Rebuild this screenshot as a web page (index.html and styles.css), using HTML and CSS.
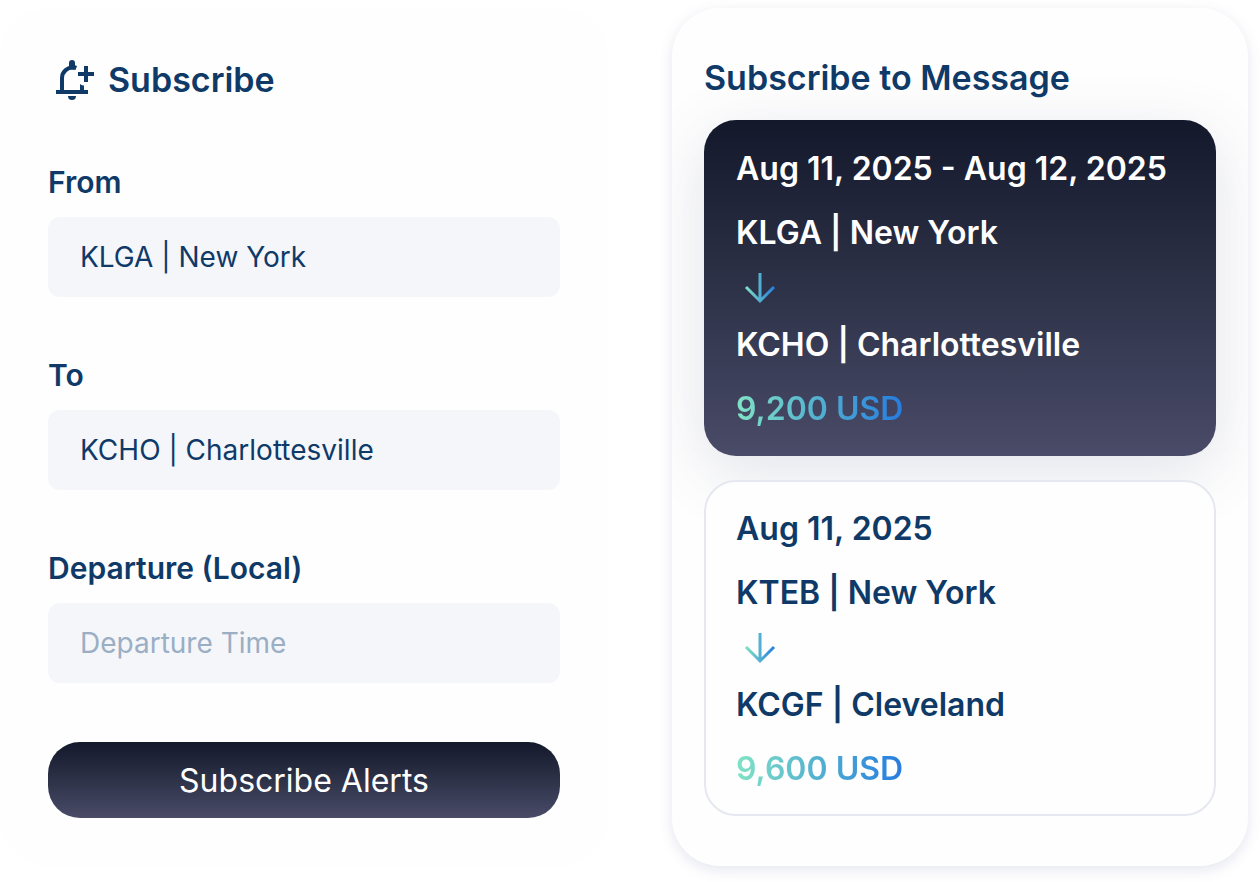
FILE: index.html
```html
<!DOCTYPE html>
<html lang="en">
<head>
    <meta charset="UTF-8">
    <meta name="viewport" content="width=device-width, initial-scale=1.0">
    <title>Subscribe</title>
    <link rel="stylesheet" href="styles.css">
</head>
<body>

<main class="page">
    <form class="panel subscribe-form">
        <h1 class="form-title">
            <svg class="bell" viewBox="0 0 48 48" aria-hidden="true">
                <path d="M14 36V22a10.500 10.500 0 0 1 12-10.300" fill="none" stroke="currentColor" stroke-width="4"/>
                <path d="M21 11V7a3 3 0 0 1 6 0v2.200l2 .8-1.500 4-6.500-1z" fill="currentColor"/>
                <path d="M8 34h32v4H8zM20 40h8a4 4 0 0 1-8 0zM32 35v-7q2 1.500 4 1.500V35zM36 10h4v6h6v4h-6v6h-4v-6h-6v-4h6z" fill="currentColor"/>
            </svg>
            Subscribe
        </h1>

        <div class="field">
            <label for="from">From</label>
            <input type="text" id="from" name="from" value="KLGA | New York">
        </div>

        <div class="field">
            <label for="to">To</label>
            <input type="text" id="to" name="to" value="KCHO | Charlottesville">
        </div>

        <div class="field">
            <label for="departure">Departure (Local)</label>
            <input type="text" id="departure" name="departure" placeholder="Departure Time">
        </div>

        <button type="submit">Subscribe Alerts</button>
    </form>

    <section class="panel messages">
        <h2>Subscribe to Message</h2>

        <article class="message dark">
            <p>Aug 11, 2025 - Aug 12, 2025</p>
            <p>KLGA | New York</p>
            <svg class="arrow" viewBox="0 0 48 32" aria-hidden="true">
                <defs>
                    <linearGradient id="arrow-fill" gradientUnits="userSpaceOnUse" x1="9" y1="0" x2="39" y2="0">
                        <stop offset="0" stop-color="#80e3c4"/>
                        <stop offset="1" stop-color="#257cdf"/>
                    </linearGradient>
                </defs>
                <path d="M24 0v28M10 14l14 14 14-14" fill="none" stroke="url(#arrow-fill)" stroke-width="3"/>
            </svg>
            <p>KCHO | Charlottesville</p>
            <p class="price">9,200 USD</p>
        </article>

        <article class="message">
            <p>Aug 11, 2025</p>
            <p>KTEB | New York</p>
            <svg class="arrow" viewBox="0 0 48 32" aria-hidden="true">
                <path d="M24 0v28M10 14l14 14 14-14" fill="none" stroke="url(#arrow-fill)" stroke-width="3"/>
            </svg>
            <p>KCGF | Cleveland</p>
            <p class="price">9,600 USD</p>
        </article>
    </section>
</main>

</body>
</html>
```
FILE: styles.css
```css
* {
    box-sizing: border-box;
}
body {
    font-family: Inter, Arial, sans-serif;
    margin: 0;
    background-color: #fff;
    color: #0f3a68;
}
h1, h2, p {
    margin: 0;
}
.page {
    display: grid;
    grid-template-columns: 608fr 576fr;
    gap: 64px;
    padding: 8px 12px 16px 0;
}
.panel {
    background-color: #fefefe;
    border-radius: 48px;
}
.subscribe-form {
    display: flex;
    flex-direction: column;
    gap: 59px;
    padding: 48px;
}
.form-title,
.messages h2 {
    font-size: 34px;
    font-weight: 600;
}
.form-title {
    display: flex;
    align-items: center;
    gap: 12px;
    line-height: 48px;
}
.bell {
    width: 48px;
    height: 48px;
}
.field {
    display: flex;
    flex-direction: column;
    gap: 16px;
}
.field label {
    font-size: 30px;
    font-weight: 600;
    line-height: 38px;
}
.field input {
    width: 100%;
    height: 80px;
    padding: 0 32px;
    border: none;
    border-radius: 12px;
    background-color: #f5f6fa;
    color: inherit;
    font: inherit;
    font-size: 28px;
}
.field input::placeholder {
    color: #9aaec4;
}
.subscribe-form button {
    height: 76px;
    border: none;
    border-radius: 32px;
    background: linear-gradient(#14182b, #2e3349 52%, #4a4b68);
    color: #fff;
    font: inherit;
    font-size: 32px;
    cursor: pointer;
}
.messages {
    padding: 48px 32px 50px;
    overflow: hidden;
    box-shadow: 0 4px 14px rgba(80, 84, 150, 0.15);
}
.messages h2 {
    margin-bottom: 20px;
    line-height: 44px;
}
.message {
    display: flex;
    flex-direction: column;
    align-items: flex-start;
    gap: 16px;
    padding: 23px 30px 21px;
    border: 2px solid #e5e8ef;
    border-radius: 32px;
    background-color: #fefefe;
    font-size: 32px;
    font-weight: 600;
    line-height: 48px;
}
.message.dark {
    margin-bottom: 24px;
    padding: 25px 32px 23px;
    border: none;
    background: linear-gradient(#14182b, #2e3349 52%, #4a4b68);
    box-shadow: 0 16px 64px rgba(80, 84, 130, 0.16);
    color: #fff;
}
.arrow {
    width: 48px;
    height: 32px;
}
.price {
    background: linear-gradient(to right, #80e3c4, #257cdf);
    -webkit-background-clip: text;
    background-clip: text;
    color: transparent;
}
```
